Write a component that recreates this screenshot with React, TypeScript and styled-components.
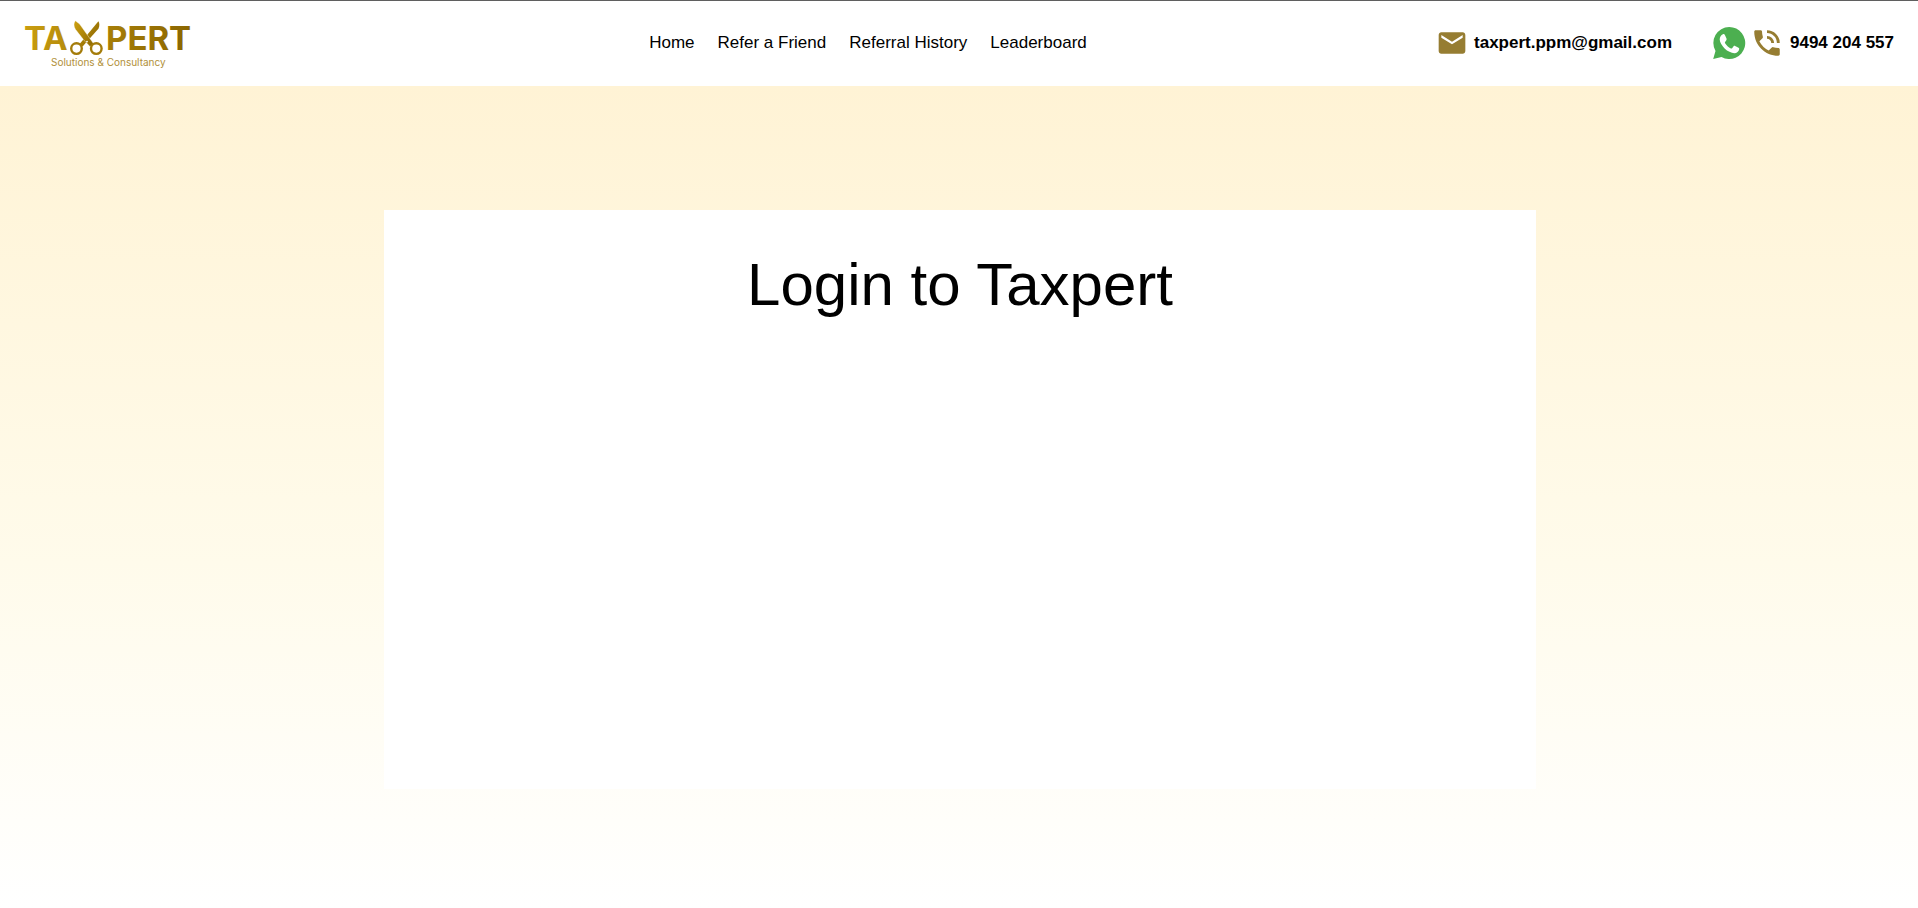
import React from 'react';
import styled, { createGlobalStyle } from 'styled-components';
import { MdEmail, MdPhoneInTalk } from 'react-icons/md';

const GlobalStyle = createGlobalStyle`
  *, *::before, *::after { box-sizing: border-box; }
  body {
    margin: 0;
    background: #fff;
    color: #000;
    font-family: "Liberation Sans", Arial, sans-serif;
  }
`;

const Page = styled.div`
  display: flex;
  flex-direction: column;
  min-height: 100vh;
`;

const Header = styled.header`
  display: grid;
  grid-template-columns: 1fr auto 1fr;
  align-items: center;
  min-height: 86px;
  padding: 0 24px 2px;
  border-top: 1px solid #5f5f5f;
  background: #fff;
`;

const LogoLink = styled.a`
  justify-self: start;
  display: flex;
`;

const Nav = styled.nav`
  display: flex;
  gap: 23px;
  margin-right: 182px;
`;

const NavLink = styled.a`
  color: #000;
  font-size: 17px;
  line-height: 24px;
  text-decoration: none;
  white-space: nowrap;
`;

const Contacts = styled.div`
  justify-self: end;
  display: flex;
  align-items: center;
  gap: 40px;
`;

const ContactGroup = styled.div`
  display: flex;
  align-items: center;
  gap: 4px;
`;

const ContactLink = styled.a`
  display: flex;
  align-items: center;
  gap: 6px;
  color: #000;
  font-size: 17px;
  font-weight: 700;
  line-height: 24px;
  text-decoration: none;
  white-space: nowrap;

  svg { color: #967d32; }
`;

const IconLink = styled.a`
  display: flex;
`;

const Main = styled.main`
  flex: 1;
  display: flex;
  flex-direction: column;
  align-items: center;
  padding: 124px 24px 119px 26px;
  background: linear-gradient(#fff3d5, #fffbeb 58%, #fff);
`;

const Card = styled.section`
  flex: 1;
  width: 100%;
  max-width: 1152px;
  padding: 40px;
  background: #fff;
`;

const Title = styled.h1`
  margin: 0;
  font-size: 60px;
  font-weight: 400;
  line-height: 70px;
  text-align: center;
`;

const LogoName = styled.text`
  font-family: Inter, sans-serif;
  font-size: 33px;
  font-weight: 700;
`;

const LogoTagline = styled.text`
  font-family: Inter, sans-serif;
  font-size: 10px;
`;

const Logo = () => (
  <svg width="170" height="56" viewBox="24 14 170 56" role="img" aria-label="Taxpert Solutions & Consultancy">
    <defs>
      <linearGradient id="gold" gradientUnits="userSpaceOnUse" x1="26" y1="22" x2="190" y2="50">
        <stop offset="0" stopColor="#c99d10" />
        <stop offset="0.5" stopColor="#a67e08" />
        <stop offset="1" stopColor="#8a6500" />
      </linearGradient>
      <linearGradient id="blade" gradientUnits="userSpaceOnUse" x1="74" y1="24" x2="99" y2="40">
        <stop offset="0" stopColor="#c99d10" />
        <stop offset="1" stopColor="#8a6500" />
      </linearGradient>
    </defs>
    <g fill="url(#gold)">
      <LogoName x="24" y="49">TA</LogoName>
      <LogoName x="106" y="49">PERT</LogoName>
      <LogoTagline x="51" y="65" fill="#b1903a">Solutions &amp; Consultancy</LogoTagline>
    </g>
    <g fill="url(#blade)">
      <path d="M98.4 20.2c1.2 1.8 1.3 4.8 0 7.6L82.6 45.4l-3-2.4 5.6-6.8z" />
      <path d="M75.4 19.8 79.6 23l14.2 20-3.8 2.6-6.4-6.8-8-10.2c-2-3.2-2.2-6.4-.2-8.8z" stroke="#fff" strokeWidth="0.4" />
    </g>
    <g fill="none" stroke="#a47c0a" strokeWidth="2.4">
      <circle cx="76.5" cy="47.6" r="5.3" />
      <circle cx="96.3" cy="47.6" r="5.3" />
    </g>
    <circle cx="87" cy="40.6" r="0.9" fill="#fff" />
  </svg>
);

const WhatsAppIcon = () => (
  <svg width="34" height="34" viewBox="0 0 34 34" aria-hidden="true">
    <path
      d="M17.2 1a16 16 0 1 1-7.7 30L1.2 33l2.3-8A16 16 0 0 1 17.2 1z"
      fill="#4caf50"
    />
    <path
      d="M10.9 8.3c.6-.3 1.6-.3 2 .6l1.6 3.7c.3.7.1 1.2-.3 1.8l-1.1 1.5c-.3.4-.3.8 0 1.3 1.4 2.3 3.2 4 5.8 5.2.5.2.9.2 1.2-.2l1.5-1.9c.4-.5.9-.6 1.5-.3l3.4 1.7c.6.3.8.7.7 1.3-.3 2.8-2.7 4.3-5 4.2-2.7-.2-6.7-1.8-9.6-4.7-2.6-2.6-4.8-6.1-4.9-8.9 0-2.2 1.4-4.8 3.2-5.3z"
      fill="#fff"
    />
  </svg>
);

const links = ['Home', 'Refer a Friend', 'Referral History', 'Leaderboard'];

export default function App() {
  return (
    <>
      <GlobalStyle />
      <Page>
        <Header>
          <LogoLink href="#home">
            <Logo />
          </LogoLink>
          <Nav aria-label="Main">
            {links.map((label) => (
              <NavLink key={label} href="#">
                {label}
              </NavLink>
            ))}
          </Nav>
          <Contacts>
            <ContactLink href="mailto:taxpert.ppm@gmail.com">
              <MdEmail size={32} aria-hidden />
              taxpert.ppm@gmail.com
            </ContactLink>
            <ContactGroup>
              <IconLink href="#whatsapp" aria-label="WhatsApp">
                <WhatsAppIcon />
              </IconLink>
              <ContactLink href="tel:9494204557">
                <MdPhoneInTalk size={34} aria-hidden />
                9494 204 557
              </ContactLink>
            </ContactGroup>
          </Contacts>
        </Header>
        <Main>
          <Card>
            <Title>Login to Taxpert</Title>
          </Card>
        </Main>
      </Page>
    </>
  );
}
